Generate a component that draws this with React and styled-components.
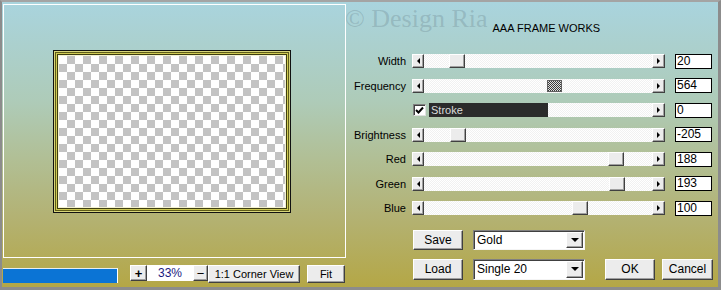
import React from "react";
import styled, { createGlobalStyle, css } from "styled-components";

const sliders = [
  { label: "Width", value: "20", pos: 25 },
  { label: "Frequency", value: "564", pos: 123, focus: true },
  { label: "", value: "0", stroke: true },
  { label: "Brightness", value: "-205", pos: 26 },
  { label: "Red", value: "188", pos: 184 },
  { label: "Green", value: "193", pos: 185 },
  { label: "Blue", value: "100", pos: 148 },
];

const GlobalStyle = createGlobalStyle`
  html, body {
    margin: 0;
    padding: 0;
    background: #ffffff;
  }
  body {
    font-family: "Liberation Sans", Arial, sans-serif;
    font-size: 11px;
  }
`;

const raised = css`
  box-sizing: border-box;
  background: #ececec;
  border: 1px solid;
  border-color: #ffffff #404040 #404040 #ffffff;
  box-shadow: inset -1px -1px 0 #a0a0a0;
`;

const Window = styled.div`
  box-sizing: border-box;
  width: 721px;
  height: 290px;
  display: flex;
  border-style: solid;
  border-width: 2px 3px 3px 2px;
  border-color: #a4a4a4 #8c8c8c #8c8c8c #8c8c8c;
  background: linear-gradient(
    180deg,
    #a9d4de 0%,
    #aecbb8 35%,
    #b1bf95 55%,
    #b3b274 75%,
    #b4a746 100%
  );
  color: #000;
`;

const LeftCol = styled.div`
  width: 344px;
  display: flex;
  flex-direction: column;
`;

const Preview = styled.div`
  box-sizing: border-box;
  margin: 2px 0 0 1px;
  width: 343px;
  height: 254px;
  border: 1px solid #ffffff;
  display: flex;
  align-items: center;
  justify-content: center;
  padding-right: 5px;
`;

const Frame = styled.div`
  border: 1px solid #111;
  padding: 5px;
  box-shadow: inset 0 0 0 1px #d8d67a, inset 0 0 0 2px #5e5c1a,
    inset 0 0 0 3px #cfcb52, inset 0 0 0 4px #3e3e10,
    inset 0 0 0 5px #f4f2d0;
`;

const Checker = styled.div`
  width: 226px;
  height: 151px;
  background: repeating-conic-gradient(#c3c3c3 0 25%, #ffffff 0 50%) 0 0 /
    16px 16px;
`;

const BottomBar = styled.div`
  display: flex;
  align-items: flex-start;
  margin-top: 7px;
  height: 18px;
`;

const Progress = styled.div`
  box-sizing: border-box;
  margin: 3px 0 0 1px;
  width: 115px;
  height: 15px;
  background: #0b74d5;
  border-top: 1px solid #e8eef0;
  border-right: 1px solid #ffffff;
`;

const SmallButton = styled.button`
  ${raised};
  width: ${(p) => p.$w}px;
  height: ${(p) => p.$h || 16}px;
  margin-left: ${(p) => p.$ml || 0}px;
  padding: 0;
  font-family: "Liberation Sans", Arial, sans-serif;
  font-size: ${(p) => p.$fs || 11}px;
  font-weight: ${(p) => (p.$bold ? 700 : 400)};
  color: #000;
  display: flex;
  align-items: center;
  justify-content: center;
`;

const ZoomField = styled.div`
  box-sizing: border-box;
  width: 46px;
  height: 16px;
  background: #ffffff;
  color: #1a1a80;
  font-size: 12px;
  display: flex;
  align-items: center;
  justify-content: center;
`;

const RightCol = styled.div`
  flex: 1;
  display: flex;
  flex-direction: column;
`;

const Header = styled.div`
  height: 47px;
  display: flex;
  align-items: flex-start;
`;

const Watermark = styled.div`
  margin: 3px 0 0 -1px;
  font-family: "Liberation Serif", "Times New Roman", serif;
  font-size: 26px;
  line-height: 27px;
  color: rgba(100, 125, 135, 0.3);
  white-space: nowrap;
`;

const Title = styled.div`
  margin: 20px 0 0 5px;
  font-size: 11px;
  line-height: 13px;
  white-space: nowrap;
`;

const Rows = styled.div`
  display: flex;
  flex-direction: column;
`;

const Row = styled.div`
  height: 24.5px;
  display: flex;
  align-items: center;
`;

const Label = styled.div`
  box-sizing: border-box;
  width: 66px;
  padding-right: 6px;
  text-align: right;
  white-space: nowrap;
`;

const Slider = styled.div`
  width: 253px;
  height: 14px;
  display: flex;
`;

const ArrowBtn = styled.div`
  ${raised};
  width: ${(p) => p.$w}px;
  height: 14px;
  display: flex;
  align-items: center;
  justify-content: center;
  &::after {
    content: "";
    width: 0;
    height: 0;
    border-top: 3px solid transparent;
    border-bottom: 3px solid transparent;
    ${(p) =>
      p.$dir === "left"
        ? "border-right: 3px solid #000;"
        : "border-left: 3px solid #000;"}
  }
`;

const TrackArea = styled.div`
  position: relative;
  flex: 1;
  height: 14px;
  background: repeating-conic-gradient(#ffffff 0 25%, #f1f1f1 0 50%) 0 0 /
    2px 2px;
`;

const Thumb = styled.div`
  ${raised};
  position: absolute;
  top: 0;
  width: 16px;
  height: 14px;
  ${(p) =>
    p.$focus &&
    css`
      top: 1px;
      width: 15px;
      height: 12px;
      border: 1px solid #606060;
      box-shadow: none;
      background: repeating-conic-gradient(#3a3a3a 0 25%, #e0e0e0 0 50%) 0 0 /
        2px 2px;
    `}
`;

const CheckBox = styled.div`
  box-sizing: border-box;
  margin: 1px 0 0 1px;
  width: 13px;
  height: 12px;
  background: #ffffff;
  border: 1px solid;
  border-color: #808080 #e0e0e0 #e0e0e0 #808080;
  box-shadow: inset 1px 1px 0 #404040;
  display: flex;
  align-items: center;
  justify-content: center;
`;

const StrokeTrack = styled(TrackArea)`
  margin-left: 3px;
`;

const StrokeFill = styled.div`
  width: 119px;
  height: 14px;
  background: #2b2b2b;
  color: #dcdcdc;
  font-size: 11px;
  line-height: 14px;
  padding-left: 2px;
  box-sizing: border-box;
`;

const ValueBox = styled.div`
  box-sizing: border-box;
  margin-left: 10px;
  width: 37px;
  height: 15px;
  background: #ffffff;
  border: 1px solid #000;
  font-size: 12px;
  line-height: 13px;
  padding-left: 1px;
`;

const Actions = styled.div`
  margin: 9px 0 0 67px;
  display: flex;
  flex-direction: column;
  gap: 9px;
`;

const ActionRow = styled.div`
  display: flex;
  align-items: center;
`;

const ActionButton = styled.button`
  ${raised};
  width: ${(p) => p.$w || 50}px;
  height: ${(p) => p.$h || 21}px;
  margin-left: ${(p) => p.$ml || 0}px;
  padding: 0;
  font-family: "Liberation Sans", Arial, sans-serif;
  font-size: 12px;
  color: #000;
`;

const Select = styled.div`
  box-sizing: border-box;
  margin-left: 10px;
  width: 112px;
  height: ${(p) => p.$h || 21}px;
  background: #ffffff;
  border: 1px solid;
  border-color: #808080 #f4f4f4 #f4f4f4 #808080;
  box-shadow: inset 1px 1px 0 #404040;
  display: flex;
  align-items: center;
  padding: 1px 1px 1px 3px;
  font-size: 12px;
`;

const SelectText = styled.span`
  flex: 1;
`;

const DropBtn = styled.div`
  ${raised};
  width: 17px;
  height: 100%;
  display: flex;
  align-items: center;
  justify-content: center;
  &::after {
    content: "";
    border-left: 4px solid transparent;
    border-right: 4px solid transparent;
    border-top: 4px solid #000;
  }
`;

const Check = () => (
  <svg width="9" height="8" viewBox="0 0 9 8">
    <path d="M1 4 L3.5 6.5 L8 1.5" stroke="#000" strokeWidth="2" fill="none" />
  </svg>
);

const SliderRow = ({ item }) => (
  <Row>
    <Label>{item.label}</Label>
    <Slider>
      {item.stroke ? (
        <>
          <CheckBox>
            <Check />
          </CheckBox>
          <StrokeTrack>
            <StrokeFill>Stroke</StrokeFill>
          </StrokeTrack>
        </>
      ) : (
        <>
          <ArrowBtn $dir="left" $w={12} />
          <TrackArea>
            <Thumb $focus={item.focus} style={{ left: item.pos }} />
          </TrackArea>
        </>
      )}
      <ArrowBtn $dir="right" $w={13} />
    </Slider>
    <ValueBox>{item.value}</ValueBox>
  </Row>
);

export default function App() {
  return (
    <>
      <GlobalStyle />
      <Window>
        <LeftCol>
          <Preview>
            <Frame>
              <Checker />
            </Frame>
          </Preview>
          <BottomBar>
            <Progress />
            <SmallButton $w={17} $ml={12} $fs={13} $bold>
              +
            </SmallButton>
            <ZoomField>33%</ZoomField>
            <SmallButton $w={15} $fs={13}>
              −
            </SmallButton>
            <SmallButton $w={92} $h={18}>
              1:1 Corner View
            </SmallButton>
            <SmallButton $w={38} $h={18} $ml={7}>
              Fit
            </SmallButton>
          </BottomBar>
        </LeftCol>
        <RightCol>
          <Header>
            <Watermark>© Design Ria</Watermark>
            <Title>AAA FRAME WORKS</Title>
          </Header>
          <Rows>
            {sliders.map((item, index) => (
              <SliderRow item={item} key={index} />
            ))}
          </Rows>
          <Actions>
            <ActionRow>
              <ActionButton $h={20}>Save</ActionButton>
              <Select $h={20}>
                <SelectText>Gold</SelectText>
                <DropBtn />
              </Select>
            </ActionRow>
            <ActionRow>
              <ActionButton>Load</ActionButton>
              <Select>
                <SelectText>Single 20</SelectText>
                <DropBtn />
              </Select>
              <ActionButton $ml={20}>OK</ActionButton>
              <ActionButton $w={51} $ml={7}>
                Cancel
              </ActionButton>
            </ActionRow>
          </Actions>
        </RightCol>
      </Window>
    </>
  );
}
